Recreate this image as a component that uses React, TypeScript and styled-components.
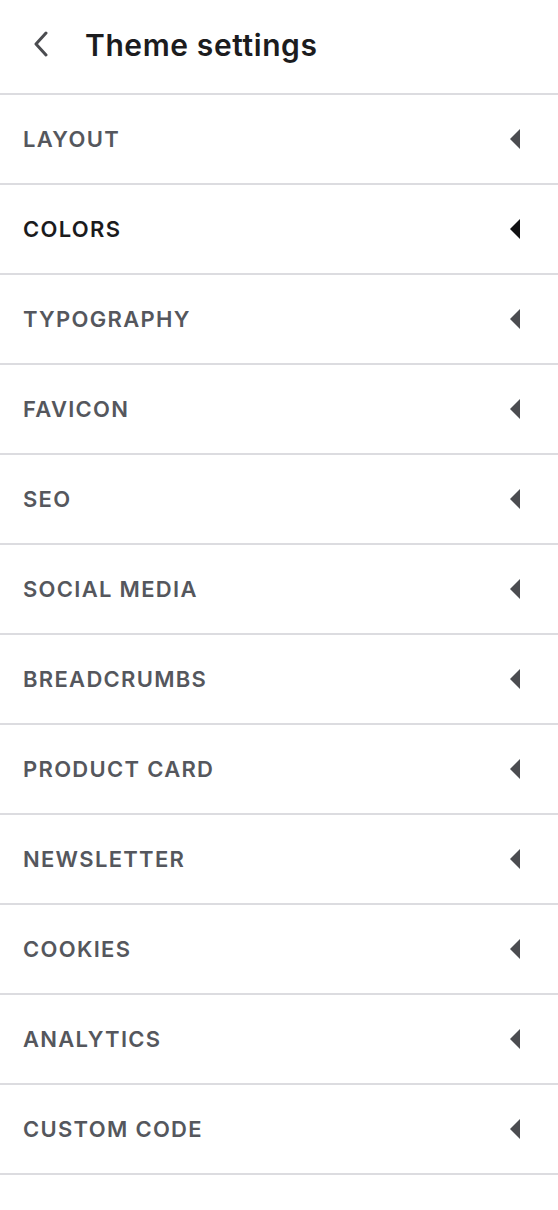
import styled, { createGlobalStyle } from 'styled-components'

const sections = [
  'LAYOUT',
  'COLORS',
  'TYPOGRAPHY',
  'FAVICON',
  'SEO',
  'SOCIAL MEDIA',
  'BREADCRUMBS',
  'PRODUCT CARD',
  'NEWSLETTER',
  'COOKIES',
  'ANALYTICS',
  'CUSTOM CODE',
];

const GlobalStyle = createGlobalStyle`
  body {
    margin: 0;
    background: #fff;
    font-family: Inter, "Noto Sans", sans-serif;
  }
`;

export default function App() {
  return (
    <>
      <GlobalStyle />
      <StyledPanel>
        <StyledHeader>
          <StyledBackButton aria-label="Back">
            <svg width="16" height="26" viewBox="0 0 16 26" fill="none">
              <path d="M13 2 L3 13 L13 24" stroke="#4b4c50" strokeWidth="3" strokeLinecap="round" strokeLinejoin="round" />
            </svg>
          </StyledBackButton>
          <StyledTitle>Theme settings</StyledTitle>
        </StyledHeader>
        <StyledList>
          {sections.map((name) => (
            <StyledRow key={name} $active={name === 'COLORS'}>
              <span>{name}</span>
              <StyledCaret $active={name === 'COLORS'} />
            </StyledRow>
          ))}
        </StyledList>
      </StyledPanel>
    </>
  )
}

const StyledPanel = styled.div`
  width: 558px;
  min-height: 1210px;
  background: #fff;
`;

const StyledHeader = styled.header`
  height: 93px;
  display: flex;
  align-items: center;
  gap: 36px;
  padding: 0 0 0 33px;
  border-bottom: 2px solid #dcdce0;
`;

const StyledBackButton = styled.button`
  display: flex;
  align-items: center;
  justify-content: center;
  padding: 0;
  border: none;
  background: transparent;
  cursor: pointer;
  margin-top: -6px;
`;

const StyledTitle = styled.h1`
  margin: 0 0 4px;
  font-size: 30px;
  font-weight: 600;
  color: #1c1c1e;
  letter-spacing: 0.6px;
`;

const StyledList = styled.ul`
  list-style: none;
  margin: 0;
  padding: 0;
`;

const StyledRow = styled.li<{ $active?: boolean }>`
  height: 88px;
  display: flex;
  align-items: center;
  justify-content: space-between;
  padding: 0 38px 0 23px;
  border-bottom: 2px solid #dcdce0;
  font-size: 22px;
  font-weight: 600;
  letter-spacing: 1.3px;
  color: ${(p) => (p.$active ? '#1b1b1d' : '#55575d')};
  cursor: pointer;
`;

const StyledCaret = styled.i<{ $active?: boolean }>`
  width: 0;
  height: 0;
  border-top: 10px solid transparent;
  border-bottom: 10px solid transparent;
  border-right: 10px solid ${(p) => (p.$active ? '#111113' : '#4b4c50')};
`;
